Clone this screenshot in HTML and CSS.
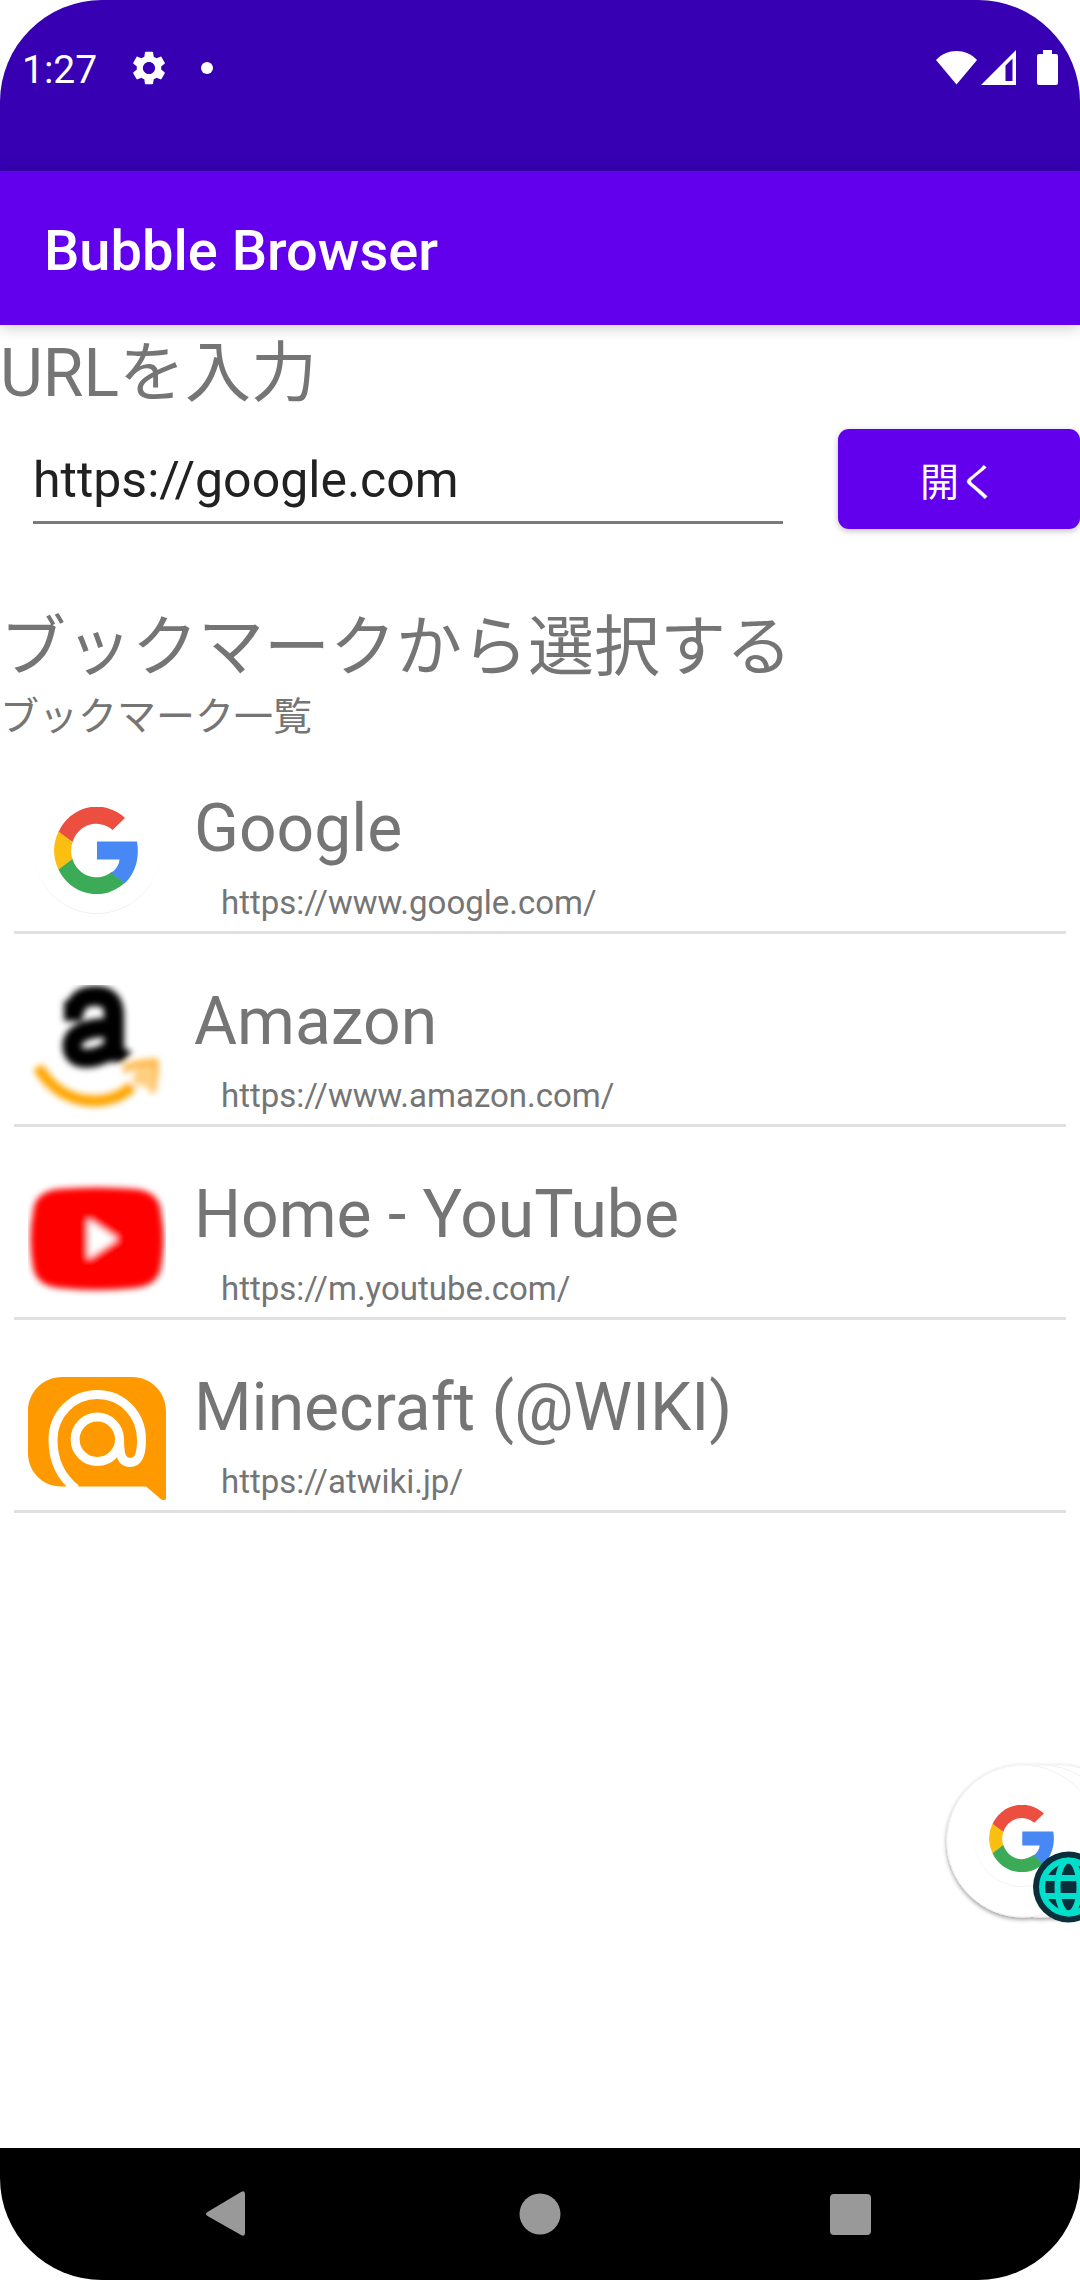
FILE: index.html
```html
<!DOCTYPE html>
<html lang="ja">
<head>
<meta charset="utf-8">
<meta name="viewport" content="width=device-width, initial-scale=1">
<title>Bubble Browser</title>
<link rel="stylesheet" href="styles.css">
</head>
<body>
<div class="screen">
  <div class="status-bar">
    <div class="status-group status-left">
      <span class="clock">1:27</span>
      <svg class="gear" viewBox="2 2 20 20" aria-hidden="true"><path fill="#fff" d="M19.14 12.94c.04-.3.06-.61.06-.94 0-.32-.02-.64-.07-.94l2.03-1.58c.18-.14.23-.41.12-.61l-1.92-3.32c-.12-.22-.37-.29-.59-.22l-2.39.96c-.5-.38-1.03-.7-1.62-.94l-.36-2.54c-.04-.24-.24-.41-.48-.41h-3.84c-.24 0-.43.17-.47.41l-.36 2.54c-.59.24-1.13.57-1.62.94l-2.39-.96c-.22-.08-.47 0-.59.22L2.74 8.87c-.12.21-.08.47.12.61l2.03 1.58c-.05.3-.09.63-.09.94s.02.64.07.94l-2.03 1.58c-.18.14-.23.41-.12.61l1.92 3.32c.12.22.37.29.59.22l2.39-.96c.5.38 1.03.7 1.62.94l.36 2.54c.05.24.24.41.48.41h3.84c.24 0 .44-.17.47-.41l.36-2.54c.59-.24 1.13-.56 1.62-.94l2.39.96c.22.08.47 0 .59-.22l1.92-3.32c.12-.22.07-.47-.12-.61l-2.01-1.58zM12 15.6c-1.98 0-3.6-1.62-3.6-3.6s1.62-3.6 3.6-3.6 3.6 1.62 3.6 3.6-1.62 3.6-3.6 3.6z"/></svg>
      <span class="dot"></span>
    </div>
    <div class="status-group">
      <svg width="41" height="36" viewBox="0 0 41 36" aria-hidden="true"><path fill="#fff" d="M0 10C11-2 30-2 41 10L20.500 34.500Z"/></svg>
      <svg class="signal" width="36" height="36" viewBox="0 0 36 36" aria-hidden="true"><path fill="#fff" fill-rule="evenodd" d="M0 35L35 0V35ZM24.500 15.500V31H31.500V8.500Z"/></svg>
      <svg width="21" height="36" viewBox="0 0 21 36" aria-hidden="true"><path fill="#fff" d="M6 0h9v4h4q2 0 2 2v27q0 2-2 2H2q-2 0-2-2V6q0-2 2-2h4z"/></svg>
    </div>
  </div>

  <header class="app-bar"><h1 class="app-title">Bubble Browser</h1></header>

  <main class="content">
    <form class="url-form">
      <label class="heading" for="url">URLを入力</label>
      <div class="url-row">
        <input class="url-input" id="url" type="text" value="https://google.com">
        <button class="open-button" type="button">開く</button>
      </div>
    </form>

    <h2 class="heading">ブックマークから選択する</h2>
    <p class="caption">ブックマーク一覧</p>

    <ul class="bookmarks">
      <li class="bookmark">
        <svg class="favicon" viewBox="0 0 138 138" aria-hidden="true">
          <circle cx="69" cy="68" r="63" fill="#eee"/>
          <circle cx="69" cy="66.500" r="63.500" fill="#fff"/>
          <svg x="26" y="24" width="84" height="87" viewBox="0 0 84 87" preserveAspectRatio="none"><use href="#g-mark"/></svg>
        </svg>
        <a class="bookmark-link" href="https://www.google.com/"><span class="name">Google</span><span class="address">https://www.google.com/</span></a>
      </li>
      <li class="bookmark">
        <svg class="favicon" viewBox="0 0 138 138" aria-hidden="true">
          <g filter="url(#soft)" fill="none">
            <path stroke="#000" stroke-width="20" d="M36 35H46C50 22 58 20 68 20C82 20 86 28 86 40V86"/>
            <path stroke="#000" stroke-width="19" d="M86 52C60 50 44 58 44 70C44 86 66 86 86 72"/>
            <path fill="#000" d="M90 70L104 76L94 86Z"/>
            <path stroke="#ffa500" stroke-width="11" d="M10 91C34 133 84 132 104 110"/>
            <path stroke="#ffb640" stroke-width="7" d="M96 95C104 87 114 87 127 86C128 96 126 106 124 116"/>
            <path fill="#ffcf80" d="M108 90H126V112L104 108Z"/>
          </g>
        </svg>
        <a class="bookmark-link" href="https://www.amazon.com/"><span class="name">Amazon</span><span class="address">https://www.amazon.com/</span></a>
      </li>
      <li class="bookmark">
        <svg class="favicon" viewBox="0 0 138 138" aria-hidden="true">
          <g filter="url(#soft)">
            <path fill="#f00" d="M32 20Q69 17 106 20Q132 22 133 44Q138 69 133 98Q130 117 106 119Q69 123 32 119Q8 117 5 98Q0 69 5 44Q6 22 32 20Z"/>
            <path fill="#fff" d="M60 50L90 70L60 90Z"/>
          </g>
        </svg>
        <a class="bookmark-link" href="https://m.youtube.com/"><span class="name">Home - YouTube</span><span class="address">https://m.youtube.com/</span></a>
      </li>
      <li class="bookmark">
        <svg class="favicon" viewBox="0 -15 138 138" aria-hidden="true">
          <path fill="#f90" d="M34 0H104C123 0 138 15 138 34V121Q138 124 134 123L118 109.500H33C15 109.500 0 95 0 76V34C0 15 15 0 34 0Z"/>
          <g fill="none" stroke="#fff" stroke-width="9">
            <circle cx="69.300" cy="62.300" r="22.200"/>
            <path d="M48 112C34 101 25 86 25 63C25 37 45 17.500 69.300 17.500C94 17.500 113.500 37 113.500 63C113.500 79 110 85.500 102 85.500C94 85.500 91.500 79 91.500 62"/>
          </g>
        </svg>
        <a class="bookmark-link" href="https://atwiki.jp/"><span class="name">Minecraft (@WIKI)</span><span class="address">https://atwiki.jp/</span></a>
      </li>
    </ul>

    <button class="bubble" type="button" aria-label="Google">
      <svg width="140" height="170" viewBox="0 0 140 170" aria-hidden="true">
        <g filter="url(#drop)" fill="#fff" stroke="#f2f2f2">
          <circle cx="119" cy="81" r="76"/><circle cx="101" cy="81" r="76"/><circle cx="83" cy="81" r="76"/>
        </g>
        <circle cx="82" cy="79" r="48" fill="#f3f3f3"/>
        <circle cx="82" cy="78" r="48" fill="#fff"/>
        <svg x="49" y="45" width="65" height="67" viewBox="0 0 84 87" preserveAspectRatio="none"><use href="#g-mark"/></svg>
        <circle cx="128.500" cy="127" r="35.500" fill="#0a2e3a"/>
        <g fill="none" stroke="#00dfcb" stroke-width="6">
          <circle cx="128.500" cy="127" r="26.500"/>
          <ellipse cx="128.500" cy="127" rx="11" ry="26.500"/>
          <path d="M104 118H153M104 136H153"/>
        </g>
      </svg>
    </button>
  </main>

  <nav class="nav-bar">
    <button class="nav-button" type="button" aria-label="Back"><svg width="48" height="48" viewBox="0 0 48 48"><path fill="#999" d="M1.500 22L35 2Q39 0 39 4V43Q39 47 35 45L1.500 26Q-1.500 24 1.500 22Z"/></svg></button>
    <button class="nav-button" type="button" aria-label="Home"><svg width="48" height="48" viewBox="0 0 48 48"><circle cx="24" cy="24" r="20.500" fill="#999"/></svg></button>
    <button class="nav-button" type="button" aria-label="Overview"><svg width="48" height="48" viewBox="0 0 48 48"><rect x="4" y="4" width="41" height="41" rx="4" fill="#999"/></svg></button>
  </nav>
</div>

<svg class="defs" width="0" height="0" aria-hidden="true">
  <defs>
    <g id="g-mark">
      <path fill="#ec4e40" d="M4.500 25A42 43.500 0 0 1 71 11L58.500 23A25 26 0 0 0 18.500 35Z"/>
      <path fill="#fbbf12" d="M4.500 24.500L18.500 35A26 27 0 0 0 18.500 52.500L4.500 62.500A43 44 0 0 1 4.500 24.500Z"/>
      <path fill="#3bab58" d="M4.500 62.500L18.500 52A25 26 0 0 0 57.500 65L70.500 76A42 43.500 0 0 1 4.500 62.500Z"/>
      <path fill="#4788f5" d="M43 34.500H83C86 51 81 67 70.500 76.500L57.500 65.500C62 62.500 65 58 65.500 52.500H43Z"/>
    </g>
    <filter id="soft" x="-10%" y="-10%" width="120%" height="120%"><feGaussianBlur stdDeviation="3"/></filter>
    <filter id="drop" x="-10%" y="-10%" width="120%" height="120%"><feDropShadow dx="0" dy="2" stdDeviation="2" flood-color="#000" flood-opacity=".4"/></filter>
  </defs>
</svg>
</body>
</html>
```
FILE: styles.css
```css
* { box-sizing: border-box; }

body {
  margin: 0;
  background: #fff;
  font-family: Roboto, "Noto Sans CJK JP", sans-serif;
  color: #757575;
}

h1, h2, p, ul { margin: 0; padding: 0; }
button { border: 0; padding: 0; font-family: inherit; cursor: pointer; }
svg { display: block; flex: none; }
.defs { position: absolute; }

.screen {
  display: flex;
  flex-direction: column;
  min-height: 100vh;
  border-radius: 102px;
  overflow: hidden;
  background: #fff;
}

/* System status bar */
.status-bar {
  display: flex;
  justify-content: space-between;
  align-items: flex-start;
  height: 171px;
  padding: 49px 22px 0;
  background: #3700b3;
  color: #fff;
}
.status-group { display: flex; align-items: center; height: 38px; }
.status-left { gap: 35px; }
.clock { padding-top: 4px; font-size: 39px; line-height: 40px; }
.gear { width: 34px; height: 36px; }
.dot { width: 12px; height: 12px; border-radius: 50%; background: #fff; }
.signal { margin: 0 20px 0 4px; }

/* App bar */
.app-bar {
  display: flex;
  align-items: center;
  height: 154px;
  padding: 6px 44px 0;
  background: #6200ee;
  box-shadow: 0 2px 14px rgba(0, 0, 0, .22);
}
.app-title { font-size: 56px; line-height: 64px; font-weight: 500; color: #fff; }

/* Page content */
.content { position: relative; flex: 1; }
.heading {
  display: block;
  font-size: 66px;
  font-weight: 400;
  line-height: 98px;
}
.caption { padding-bottom: 4px; font-size: 39px; line-height: 40px; }

.url-row {
  display: flex;
  gap: 55px;
  padding: 6px 0 70px 33px;
}
.url-input {
  flex: 1;
  min-width: 0;
  height: 95px;
  border: 0;
  border-bottom: 3px solid #7b7b7b;
  padding: 10px 0 0;
  background: transparent;
  color: #212121;
  font-family: inherit;
  font-size: 50px;
  outline: 0;
}
.open-button {
  width: 242px;
  height: 100px;
  border-radius: 11px;
  background: #6200ee;
  box-shadow: 0 2px 6px rgba(0, 0, 0, .25);
  color: #fff;
  font-size: 39px;
}

/* Bookmark list */
.bookmarks { margin: 0 14px; list-style: none; }
.bookmark {
  display: flex;
  align-items: flex-end;
  gap: 28px;
  height: 193px;
  padding: 0 14px 10px;
  border-bottom: 3px solid #e0e0e0;
}
.favicon { width: 138px; height: 138px; }
.bookmark-link {
  display: flex;
  flex-direction: column;
  gap: 18px;
  color: inherit;
  text-decoration: none;
}
.name { font-size: 66px; line-height: 77px; }
.address { padding-left: 27px; font-size: 33px; line-height: 36px; }

/* Floating bubble over the page */
.bubble {
  position: absolute;
  top: 1435px;
  right: 0;
  background: transparent;
}

/* System navigation */
.nav-bar {
  display: grid;
  grid-template-columns: repeat(3, 1fr);
  height: 132px;
  padding: 0 75px;
  background: #000;
}
.nav-button { display: grid; place-items: center; background: transparent; }
```
